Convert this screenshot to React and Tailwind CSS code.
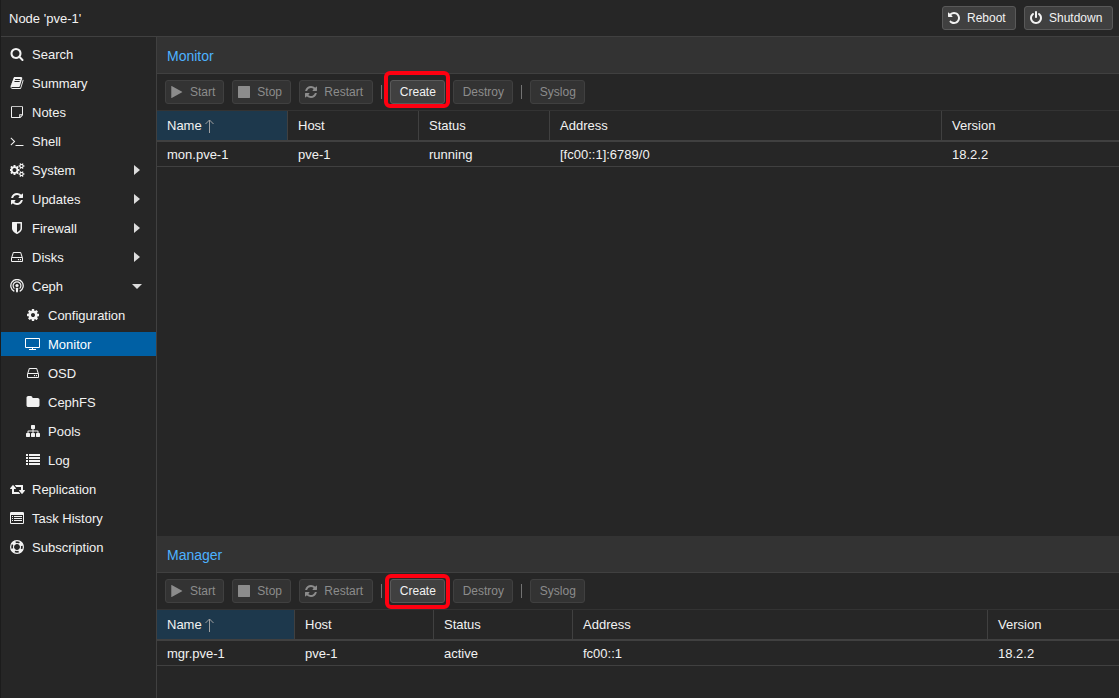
const PATHS = {
  search:
    "M1216 832q0-185-131.5-316.5t-316.5-131.5-316.5 131.5-131.5 316.5 131.5 316.5 316.5 131.5 316.5-131.5 131.5-316.5zm512 832q0 52-38 90t-90 38q-54 0-90-38l-343-342q-179 124-399 124-143 0-273.5-55.5t-225-150-150-225-55.5-273.5 55.5-273.5 150-225 225-150 273.5-55.5 273.5 55.5 225 150 150 225 55.5 273.5q0 220-124 399l343 343q37 37 37 90z",
  book: "M1703 478q40 57 18 129l-275 906q-19 64-76.5 107.5t-122.5 43.5h-923q-77 0-148.5-53.5t-99.5-131.5q-24-67-2-127 0-4 3-27t4-37q1-8-3-21.5t-3-19.500q2-11 8-21t16.5-23.5 16.5-23.5q23-38 45-91.5t30-91.5q3-10 .5-30t-.5-28q3-11 17-28t17-23q21-36 42-92t25-90q1-9-2.5-32t.5-28q4-13 22-30.5t22-22.5q19-26 42.5-84.5t27.5-96.5q1-8-3-25.5t-2-26.5q2-8 9-18t18-23 17-21q8-12 16.5-30.5t15-35 16-36 19.5-32 26.5-23.5 36-11.5 47.5 5.5l-1 3q38-9 51-9h761q74 0 114 56t18 130l-274 906q-36 119-71.5 153.5t-128.5 34.5h-869q-27 0-38 15-11 16-1 43 24 70 144 70h923q29 0 56-15.5t35-41.5l300-987q7-22 5-57 38 15 59 43zm-1064 2q-4 13 2 22.5t20 9.5h608q13 0 25.5-9.5t16.5-22.5l21-64q4-13-2-22.5t-20-9.5h-608q-13 0-25.5 9.5t-16.5 22.5zm-83 256q-4 13 2 22.5t20 9.5h608q13 0 25.5-9.5t16.5-22.5l21-64q4-13-2-22.5t-20-9.5h-608q-13 0-25.5 9.5t-16.5 22.5z",
  note: "M1536 1175v-919h-1280v1280h919v-320q0-41 41-41zm-23 128h-210v210zm151-1047v992q0 40-28 88l-288 288q-30 40-84 40h-1040q-96 0-96-96v-1312q0-96 96-96h1344q96 0 96 96z",
  terminal:
    "M649 983l-466 466q-10 10-23 10t-23-10l-50-50q-10-10-10-23t10-23l393-393-393-393q-10-10-10-23t10-23l50-50q10-10 23-10t23 10l466 466q10 10 10 23t-10 23zm1079 457v64q0 14-9 23t-23 9h-960q-14 0-23-9t-9-23v-64q0-14 9-23t23-9h960q14 0 23 9t9 23z",
  cogs: "M832 896q0-106-75-181t-181-75-181 75-75 181 75 181 181 75 181-75 75-181zm768 512q0-52-38-90t-90-38-90 38-38 90q0 53 37.5 90.5t90.5 37.5 90.5-37.5 37.5-90.5zm0-1024q0-52-38-90t-90-38-90 38-38 90q0 53 37.5 90.5t90.5 37.5 90.5-37.5 37.5-90.5zm-384 421v185q0 10-7 19.5t-16 10.5l-155 24q-11 35-32 76 34 48 90 115 7 11 7 20 0 12-7 19-23 30-82.5 89.5t-78.5 59.5q-11 0-21-7l-115-90q-37 19-77 31-11 108-23 155-7 24-30 24h-186q-11 0-20-7.5t-10-17.5l-23-153q-34-10-75-31l-118 89q-7 7-20 7-11 0-21-8-144-133-144-160 0-9 7-19 10-14 41-53t47-61q-23-44-35-82l-152-24q-10-1-17-9.5t-7-19.5v-185q0-10 7-19.5t16-10.5l155-24q11-35 32-76-34-48-90-115-7-11-7-20 0-12 7-20 22-30 82-89t79-59q11 0 21 7l115 90q34-18 77-32 11-108 23-154 7-24 30-24h186q11 0 20 7.5t10 17.5l23 153q34 10 75 31l118-89q8-7 20-7 11 0 21 8 144 133 144 160 0 8-7 19-12 16-42 54t-45 60q23 48 34 82l152 23q10 2 17 10.5t7 19.5zm640 533v140q0 16-149 31-12 27-30 52 51 113 51 138 0 4-4 7-122 71-124 71-8 0-46-47t-52-68q-20 2-30 2t-30-2q-14 21-52 68t-46 47q-2 0-124-71-4-3-4-7 0-25 51-138-18-25-30-52-149-15-149-31v-140q0-16 149-31 13-29 30-52-51-113-51-138 0-4 4-7 4-2 35-20t59-34 30-16q8 0 46 46.5t52 67.5q20-2 30-2t30 2q51-71 92-112l6-2q4 0 124 70 4 3 4 7 0 25-51 138 17 23 30 52 149 15 149 31zm0-1024v140q0 16-149 31-12 27-30 52 51 113 51 138 0 4-4 7-122 71-124 71-8 0-46-47t-52-68q-20 2-30 2t-30-2q-14 21-52 68t-46 47q-2 0-124-71-4-3-4-7 0-25 51-138-18-25-30-52-149-15-149-31v-140q0-16 149-31 13-29 30-52-51-113-51-138 0-4 4-7 4-2 35-20t59-34 30-16q8 0 46 46.5t52 67.5q20-2 30-2t30 2q51-71 92-112l6-2q4 0 124 70 4 3 4 7 0 25-51 138 17 23 30 52 149 15 149 31z",
  refresh:
    "M1639 1056q0 5-1 7-64 268-268 434.5t-478 166.5q-146 0-282.5-55t-243.5-157l-129 129q-19 19-45 19t-45-19-19-45v-448q0-26 19-45t45-19h448q26 0 45 19t19 45-19 45l-137 137q71 66 161 102t187 36q134 0 250-65t186-179q11-17 53-117 8-23 30-23h192q13 0 22.5 9.5t9.5 22.5zm25-800v448q0 26-19 45t-45 19h-448q-26 0-45-19t-19-45 19-45l138-138q-148-137-349-137-134 0-250 65t-186 179q-11 17-53 117-8 23-30 23h-199q-13 0-22.5-9.5t-9.5-22.5v-7q65-268 270-434.5t480-166.5q146 0 284 55.5t245 156.5l130-129q19-19 45-19t45 19 19 45z",
  shield:
    "M1344 960v-640h-448v1137q119-63 213-137 235-184 235-360zm192-768v768q0 86-33.5 170.5t-83 150-118 127.5-126.5 103-121 77.5-89.5 49.5-42.5 20q-12 6-26 6t-26-6q-16-7-42.5-20t-89.5-49.5-121-77.5-126.5-103-118-127.5-83-150-33.5-170.5v-768q0-26 19-45t45-19h1152q26 0 45 19t19 45z",
  disk: "M1168 1216q0 33-23.5 56.5t-56.5 23.5-56.5-23.5-23.5-56.5 23.5-56.5 56.5-23.5 56.5 23.5 23.5 56.5zm256 0q0 33-23.5 56.5t-56.5 23.5-56.5-23.5-23.5-56.5 23.5-56.5 56.5-23.5 56.5 23.5 23.5 56.5zm112 160v-320q0-13-9.5-22.5t-22.5-9.5h-1216q-13 0-22.5 9.5t-9.5 22.5v320q0 13 9.5 22.5t22.5 9.5h1216q13 0 22.5-9.5t9.5-22.5zm-1230-480h1180l-157-482q-4-13-16-21.5t-26-8.5h-782q-14 0-26 8.5t-16 21.5zm1358 160v320q0 66-47 113t-113 47h-1216q-66 0-113-47t-47-113v-320q0-25 16-75l197-606q17-53 63-86t101-33h782q55 0 101 33t63 86l197 606q16 50 16 75z",
  cog: "M1152 896q0-106-75-181t-181-75-181 75-75 181 75 181 181 75 181-75 75-181zm512-109v222q0 12-8 23t-20 13l-185 28q-19 54-39 91 35 50 107 138 10 12 10 25t-9 23q-27 37-99 108t-94 71q-12 0-26-9l-138-108q-44 23-91 38-16 136-29 186-7 28-36 28h-222q-14 0-24.5-8.5t-11.5-21.5l-28-184q-49-16-90-37l-141 107q-10 9-25 9-14 0-25-11-126-114-165-168-7-10-7-23 0-12 8-23 15-21 51-66.5t54-70.5q-27-50-41-99l-183-27q-13-2-21-12.5t-8-23.5v-222q0-12 8-23t19-13l186-28q14-46 39-92-40-57-107-138-10-12-10-24 0-10 9-23 26-36 98.5-107.5t94.5-71.5q13 0 26 10l138 107q44-23 91-38 16-136 29-186 7-28 36-28h222q14 0 24.5 8.5t11.5 21.5l28 184q49 16 90 37l142-107q9-9 24-9 13 0 25 10 129 119 165 170 7 8 7 22 0 12-8 23-15 21-51 66.5t-54 70.5q26 50 41 98l183 28q13 2 21 12.5t8 23.5z",
  folder:
    "M1728 608v704q0 92-66 158t-158 66h-1216q-92 0-158-66t-66-158v-960q0-92 66-158t158-66h320q92 0 158 66t66 158v32h672q92 0 158 66t66 158z",
  sitemap:
    "M1792 1248v320q0 40-28 68t-68 28h-320q-40 0-68-28t-28-68v-320q0-40 28-68t68-28h96v-192h-512v192h96q40 0 68 28t28 68v320q0 40-28 68t-68 28h-320q-40 0-68-28t-28-68v-320q0-40 28-68t68-28h96v-192h-512v192h96q40 0 68 28t28 68v320q0 40-28 68t-68 28h-320q-40 0-68-28t-28-68v-320q0-40 28-68t68-28h96v-192q0-52 38-90t90-38h512v-192h-96q-40 0-68-28t-28-68v-320q0-40 28-68t68-28h320q40 0 68 28t28 68v320q0 40-28 68t-68 28h-96v192h512q52 0 90 38t38 90v192h96q40 0 68 28t28 68z",
  list: "M0 128h256v256h-256zM384 128h1408v256h-1408zM0 512h256v256h-256zM384 512h1408v256h-1408zM0 896h256v256h-256zM384 896h1408v256h-1408zM0 1280h256v256h-256zM384 1280h1408v256h-1408z",
  retweet:
    "M1280 1504q0 13-9.5 22.5t-22.5 9.5h-960q-8 0-13.5-2t-9-7-5.5-8-3-11.5-1-11.5v-600h-192q-26 0-45-19t-19-45q0-24 15-41l320-384q19-22 49-22t49 22l320 384q15 17 15 41 0 26-19 45t-45 19h-192v384h576q16 0 25 11l160 192q7 10 7 21zm640-416q0 24-15 41l-320 384q-20 23-49 23t-49-23l-320-384q-15-17-15-41 0-26 19-45t45-19h192v-384h-576q-16 0-25-12l-160-192q-7-9-7-20 0-13 9.5-22.5t22.5-9.5h960q8 0 13.5 2t9 7 5.5 8 3 11.5 1 11.5v600h192q26 0 45 19t19 45z",
  listAlt:
    "M160 128h1472q160 0 160 160v1216q0 160-160 160h-1472q-160 0-160-160v-1216q0-160 160-160zM128 512v992q0 32 32 32h1472q32 0 32-32v-992zM256 640h128v128h-128zM512 640h1024v128h-1024zM256 896h128v128h-128zM512 896h1024v128h-1024zM256 1152h128v128h-128zM512 1152h1024v128h-1024z",
  undo: "M1664 896q0 156-61 298t-164 245-245 164-298 61q-172 0-327-72.5t-264-204.5q-7-10-6.500-22.5t8.500-20.500l137-138q10-9 25-9 16 2 23 12 73 95 179 147t225 52q104 0 198.5-40.5t163.5-109.5 109.5-163.5 40.5-198.5-40.5-198.5-109.5-163.5-163.5-109.5-198.5-40.5q-98 0-188 35.5t-160 101.5l137 138q31 30 14 69-17 40-59 40h-448q-26 0-45-19t-19-45v-448q0-42 40-59 39-17 69 14l130 129q107-101 244.5-156.5t284.5-55.5q156 0 298 61t245 164 164 245 61 298z",
  power:
    "M1664 896q0 156-61 298t-164 245-245 164-298 61-298-61-245-164-164-245-61-298q0-182 80.5-343t226.5-270q43-32 95.5-25t83.5 50q32 42 24.5 94.5t-49.5 84.5q-98 74-151.5 181t-53.5 228q0 104 40.5 198.5t109.5 163.5 163.5 109.5 198.5 40.5 198.5-40.5 163.5-109.5 109.5-163.5 40.5-198.5q0-121-53.5-228t-151.5-181q-42-32-49.5-84.5t24.5-94.5q31-43 84-50t95 25q146 109 226.5 270t80.5 343zm-640-768v640q0 52-38 90t-90 38-90-38-38-90v-640q0-52 38-90t90-38 90 38 38 90z",
  play: "M1548 927l-1328 738q-23 13-39.5 3t-16.5-36v-1472q0-26 16.5-36t39.5 3l1328 738q23 13 23 31t-23 31z",
  stop: "M1664 192v1408q0 26-19 45t-45 19h-1408q-26 0-45-19t-19-45v-1408q0-26 19-45t45-19h1408q26 0 45 19t19 45z",
};

function Icon({ name }) {
  if (name === "ceph") {
    return (
      <svg className="size-3.5" viewBox="0 0 14 14" fill="none" stroke="currentColor" strokeWidth="1.3" aria-hidden="true">
        <path d="M4.300 12.300A6.200 6.200 0 1 1 9.700 12.300" />
        <path d="M4.400 9.600A3.900 3.900 0 1 1 9.600 9.600" strokeWidth="1.200" />
        <circle cx="7" cy="6.500" r="1.600" fill="currentColor" stroke="none" />
        <path d="M5.700 9q1.300-.5 2.600 0l-.4 3.800q-.1.700-.9.700t-.9-.7z" fill="currentColor" stroke="none" />
      </svg>
    );
  }
  if (name === "ring") {
    return (
      <svg className="size-3.5" viewBox="0 0 14 14" fill="none" stroke="currentColor" aria-hidden="true">
        <circle cx="7" cy="7" r="6.400" strokeWidth="1.200" />
        <circle cx="7" cy="7" r="3.500" strokeWidth="1.100" />
        <circle cx="7" cy="7" r="4.900" strokeWidth="3.600" strokeDasharray="3.700 3.997" strokeDashoffset="-2" />
      </svg>
    );
  }
  if (name === "monitor") {
    return (
      <svg className="h-3.5 w-4" viewBox="0 0 16 14" fill="currentColor" aria-hidden="true">
        <path fillRule="evenodd" d="M1 1h13q1 0 1 1v8q0 1-1 1h-13q-1 0-1-1v-8q0-1 1-1zM1 2v8h13v-8z" />
        <path d="M7 11h1v1h3v1h-7v-1h3z" />
      </svg>
    );
  }
  const wide = name === "cogs" || name === "retweet";
  return (
    <svg
      className={wide ? "h-3.5 w-[15px]" : "size-3.5"}
      viewBox={wide ? "0 0 1920 1792" : "0 0 1792 1792"}
      fill="currentColor"
      fillRule={name === "listAlt" || name === "note" ? "evenodd" : "nonzero"}
      aria-hidden="true"
    >
      <path d={PATHS[name]} />
    </svg>
  );
}

const NAV = [
  { label: "Search", icon: "search" },
  { label: "Summary", icon: "book" },
  { label: "Notes", icon: "note" },
  { label: "Shell", icon: "terminal" },
  { label: "System", icon: "cogs", arrow: "right" },
  { label: "Updates", icon: "refresh", arrow: "right" },
  { label: "Firewall", icon: "shield", arrow: "right" },
  { label: "Disks", icon: "disk", arrow: "right" },
  { label: "Ceph", icon: "ceph", arrow: "down" },
  { label: "Configuration", icon: "cog", child: true },
  { label: "Monitor", icon: "monitor", child: true, active: true },
  { label: "OSD", icon: "disk", child: true },
  { label: "CephFS", icon: "folder", child: true },
  { label: "Pools", icon: "sitemap", child: true },
  { label: "Log", icon: "list", child: true },
  { label: "Replication", icon: "retweet" },
  { label: "Task History", icon: "listAlt" },
  { label: "Subscription", icon: "ring" },
];

function Arrow({ direction }) {
  return (
    <svg className="ml-auto size-2.5 text-[#dcdcdc]" viewBox="0 0 10 10" fill="currentColor" aria-hidden="true">
      <path d={direction === "down" ? "M0 3h10l-5 5z" : "M2 0l6 5-6 5z"} />
    </svg>
  );
}

function NavItem({ item }) {
  return (
    <li>
      <a
        href="#"
        aria-current={item.active ? "page" : undefined}
        className={
          "flex h-6 items-center gap-[7px] pr-3.5 " +
          (item.child ? "pl-6 " : "pl-2 ") +
          (item.active ? "bg-[#0060a4] text-white" : "")
        }
      >
        <span className="flex w-4 shrink-0 justify-center">
          <Icon name={item.icon} />
        </span>
        <span className="pt-0.5">{item.label}</span>
        {item.arrow && <Arrow direction={item.arrow} />}
      </a>
    </li>
  );
}

function Button({ icon, disabled, width = "", children }) {
  return (
    <button
      type="button"
      disabled={disabled}
      className={
        "flex h-6 items-center gap-1.5 rounded-[3px] border pr-2 text-xs whitespace-nowrap " +
        (icon ? "pl-1 " : "justify-center pl-2 ") +
        width +
        (disabled
          ? " border-[#404040] bg-[#333333] text-[#8c8c8c]"
          : " border-[#595959] bg-[#404040] text-[#f2f2f2]")
      }
    >
      {icon && <Icon name={icon} />}
      {children}
    </button>
  );
}

function Separator() {
  return <span className="h-3.5 w-px bg-[#737373]" />;
}

function Panel({ title, columns, row, markClass, className }) {
  return (
    <section className={className}>
      <h2 className="flex h-[37px] items-center border-b border-[#404040] bg-[#333333] px-2.5 pt-0.5 text-sm text-[#4db2ff]">
        {title}
      </h2>
      <div className="flex h-[37px] items-center gap-2 border-b border-[#333333] px-2">
        <Button icon="play" width="min-w-[59px]" disabled>Start</Button>
        <Button icon="stop" width="min-w-[59px]" disabled>Stop</Button>
        <Button icon="refresh" width="min-w-[74px]" disabled>Restart</Button>
        <Separator />
        <div className="relative">
          <Button width="min-w-[55px]">Create</Button>
          <span className={"pointer-events-none absolute rounded-md border-4 border-[#ff0010] " + markClass} />
        </div>
        <Button width="min-w-[60px]" disabled>Destroy</Button>
        <Separator />
        <Button width="min-w-[55px]" disabled>Syslog</Button>
      </div>
      <table className="w-full table-fixed border-separate border-spacing-0 text-left">
        <thead>
          <tr>
            {columns.map(([label, width], i) => (
              <th
                key={label}
                scope="col"
                className={
                  "h-[31px] border-b-2 border-[#404040] px-2.5 py-0 font-normal " +
                  width +
                  (i < columns.length - 1 ? " border-r" : "") +
                  (i === 0 ? " bg-[#1d384c]" : "")
                }
              >
                <span className="flex items-center gap-[3px]">
                  {label}
                  {i === 0 && (
                    <svg className="h-3.5 w-2.5 text-[#a0a0a0]" viewBox="0 0 10 14" fill="none" stroke="currentColor" aria-hidden="true">
                      <path d="M4.500 14V1M.5 5L4.500 1l4 4" />
                    </svg>
                  )}
                </span>
              </th>
            ))}
          </tr>
        </thead>
        <tbody>
          <tr>
            {row.map((cell, i) => (
              <td key={i} className="h-[25px] border-b border-[#404040] px-2.5 pt-0.5 pb-0">
                {cell}
              </td>
            ))}
          </tr>
        </tbody>
      </table>
    </section>
  );
}

export default function App() {
  return (
    <div className="flex min-h-screen flex-col border-l border-[#1c1c1c] bg-[#262626] font-['Liberation_Sans',Arial,sans-serif] text-[13px] leading-4 text-[#f2f2f2]">
      <header className="flex h-[37px] items-center gap-2 border-b border-[#404040] pr-1.5 pl-2">
        <h1 className="mr-auto pt-0.5">Node 'pve-1'</h1>
        <Button icon="undo" width="min-w-[74px]">Reboot</Button>
        <Button icon="power" width="min-w-[89px]">Shutdown</Button>
      </header>
      <div className="flex flex-1">
        <nav className="w-[156px] shrink-0 border-r border-[#404040] pt-[5px]">
          <ul className="flex flex-col gap-[5px]">
            {NAV.map((item) => (
              <NavItem key={item.label} item={item} />
            ))}
          </ul>
        </nav>
        <main className="flex min-w-0 flex-1 flex-col">
          <Panel
            className="flex-1"
            title="Monitor"
            markClass="-top-[9px] -right-[5px] -bottom-1 -left-1.5"
            columns={[
              ["Name", "w-[131px]"],
              ["Host", "w-[131px]"],
              ["Status", "w-[131px]"],
              ["Address", "w-[392px]"],
              ["Version", ""],
            ]}
            row={["mon.pve-1", "pve-1", "running", "[fc00::1]:6789/0", "18.2.2"]}
          />
          <Panel
            className="pb-8"
            title="Manager"
            markClass="-top-[5px] -right-[5px] -bottom-1.5 -left-[5px]"
            columns={[
              ["Name", "w-[138px]"],
              ["Host", "w-[139px]"],
              ["Status", "w-[139px]"],
              ["Address", "w-[415px]"],
              ["Version", ""],
            ]}
            row={["mgr.pve-1", "pve-1", "active", "fc00::1", "18.2.2"]}
          />
        </main>
      </div>
    </div>
  );
}
